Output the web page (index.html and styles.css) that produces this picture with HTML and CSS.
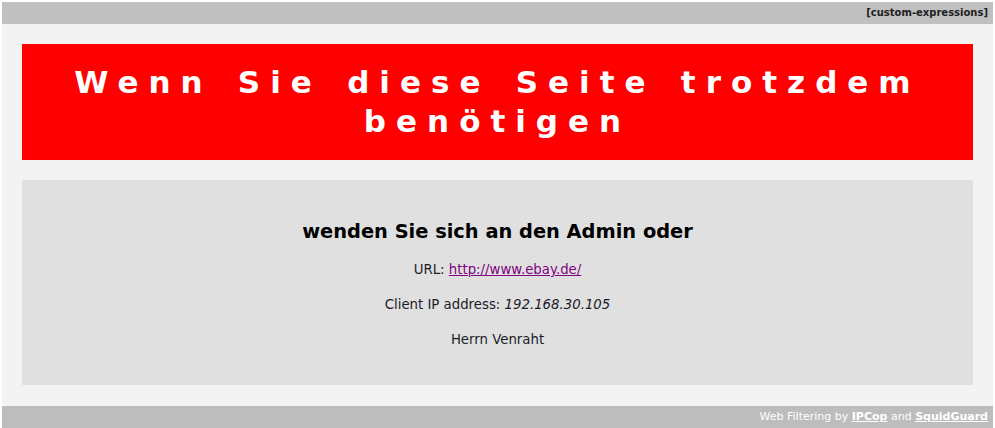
FILE: index.html
```html
<!DOCTYPE html>
<html lang="de">
<head>
    <meta charset="UTF-8">
    <title>Zugriff verweigert</title>
    <link rel="stylesheet" href="styles.css">
</head>
<body>
    <div class="top-bar">[custom-expressions]</div>
    <div class="page">
        <div class="msg-title">
            <h1>Wenn Sie diese Seite trotzdem ben&ouml;tigen</h1>
        </div>
        <div class="msg-body">
            <h2>wenden Sie sich an den Admin oder</h2>
            <p>URL: <a href="http://www.ebay.de/">http://www.ebay.de/</a></p>
            <p>Client IP address: <i>192.168.30.105</i></p>
            <p>Herrn Venraht</p>
        </div>
    </div>
    <div class="bottom-bar">
        Web Filtering by <a href="#">IPCop</a> and <a href="#">SquidGuard</a>
    </div>
</body>
</html>
```

FILE: styles.css
```css
html {
    background: #ffffff;
}

body {
    margin: 2px 2px 0 2px;
    font-family: "DejaVu Sans", Verdana, sans-serif;
    color: #1c1c28;
}

.top-bar {
    background: #c0c0c0;
    height: 22px;
    line-height: 22px;
    text-align: right;
    font-size: 10px;
    font-weight: bold;
    color: #202020;
    padding-right: 5px;
}

.page {
    background: #f3f3f3;
    padding: 20px 20px 21px 20px;
}

.msg-title {
    background: #ff0000;
    padding: 19px 10px;
    text-align: center;
}

.msg-title h1 {
    margin: 0;
    color: #ffffff;
    font-size: 31px;
    line-height: 39px;
    font-weight: bold;
    letter-spacing: 10px;
    word-spacing: 4.5px;
}

.msg-body {
    margin-top: 20px;
    background: #e0e0e0;
    padding: 39px 20px 28px;
    text-align: center;
}

.msg-body h2 {
    margin: 0 0 7px;
    font-size: 19.4px;
    line-height: 26px;
    color: #000000;
}

.msg-body p {
    margin: 0;
    font-size: 13.3px;
    line-height: 35px;
}

.msg-body a {
    color: #800080;
}

.bottom-bar {
    background: #bdbdbd;
    height: 22px;
    line-height: 22px;
    text-align: right;
    font-size: 11px;
    color: #ffffff;
    padding-right: 5px;
}

.bottom-bar a {
    color: #ffffff;
    font-weight: bold;
}
```
